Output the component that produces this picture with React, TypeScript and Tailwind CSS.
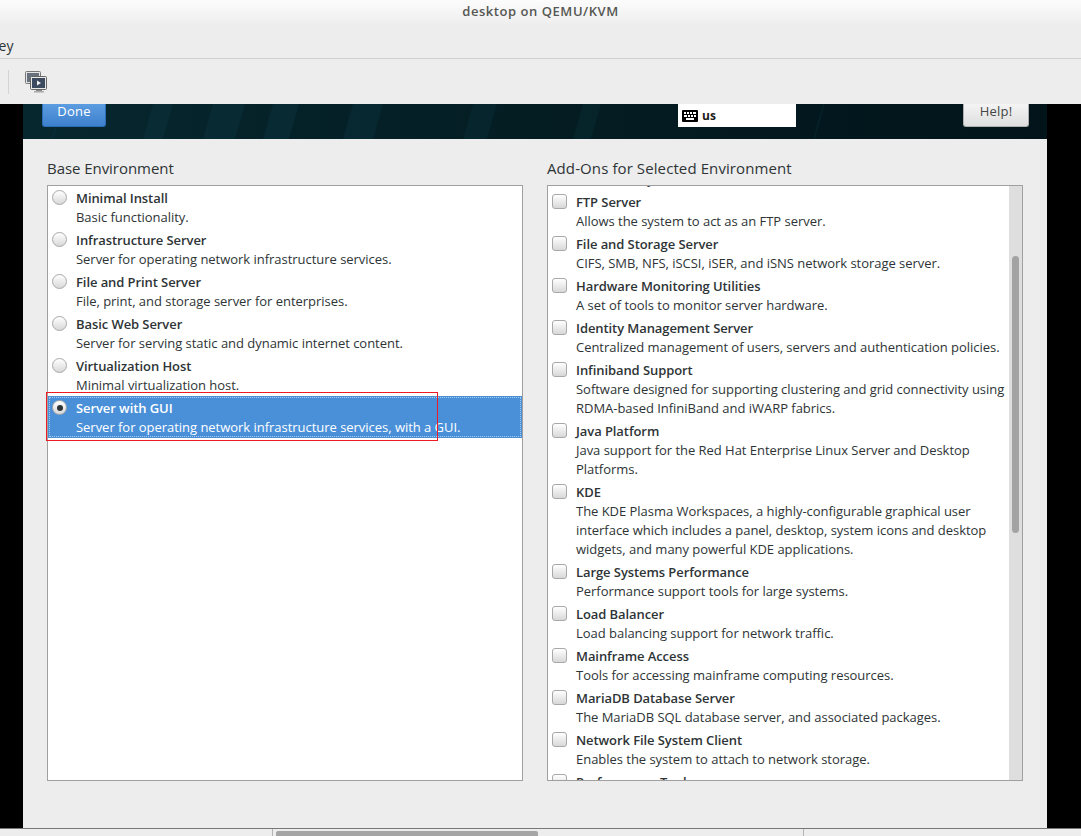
const font = { fontFamily: '"Open Sans", "Noto Sans", sans-serif' };

const baseEnvironments = [
  ["Minimal Install", "Basic functionality."],
  ["Infrastructure Server", "Server for operating network infrastructure services."],
  ["File and Print Server", "File, print, and storage server for enterprises."],
  ["Basic Web Server", "Server for serving static and dynamic internet content."],
  ["Virtualization Host", "Minimal virtualization host."],
];

const addOns: [string, string[]][] = [
  ["FTP Server", ["Allows the system to act as an FTP server."]],
  ["File and Storage Server", ["CIFS, SMB, NFS, iSCSI, iSER, and iSNS network storage server."]],
  ["Hardware Monitoring Utilities", ["A set of tools to monitor server hardware."]],
  ["Identity Management Server", ["Centralized management of users, servers and authentication policies."]],
  ["Infiniband Support", ["Software designed for supporting clustering and grid connectivity using", "RDMA-based InfiniBand and iWARP fabrics."]],
  ["Java Platform", ["Java support for the Red Hat Enterprise Linux Server and Desktop", "Platforms."]],
  ["KDE", ["The KDE Plasma Workspaces, a highly-configurable graphical user", "interface which includes a panel, desktop, system icons and desktop", "widgets, and many powerful KDE applications."]],
  ["Large Systems Performance", ["Performance support tools for large systems."]],
  ["Load Balancer", ["Load balancing support for network traffic."]],
  ["Mainframe Access", ["Tools for accessing mainframe computing resources."]],
  ["MariaDB Database Server", ["The MariaDB SQL database server, and associated packages."]],
  ["Network File System Client", ["Enables the system to attach to network storage."]],
  ["Performance Tools", ["Tools for diagnosing system and application-level performance problems."]],
];

function Radio({ checked }: { checked?: boolean }) {
  return (
    <span className="flex h-[15px] w-[15px] shrink-0 items-center justify-center rounded-full border border-[#a8a8a8] bg-gradient-to-b from-[#ffffff] to-[#d8d8d8]">
      {checked && <span className="h-[6px] w-[6px] rounded-full bg-[#2e3436]" />}
    </span>
  );
}

function RowText({ title, lines }: { title: string; lines: string[] }) {
  return (
    <div className="whitespace-nowrap">
      <div className="h-[19px] text-[13px] leading-[19px] font-semibold tracking-[-0.08px]">{title}</div>
      {lines.map((l) => (
        <div key={l} className="h-[19px] text-[13px] leading-[19px] tracking-[-0.03px]">{l}</div>
      ))}
    </div>
  );
}

function Row({ title, lines, selected }: { title: string; lines: string[]; selected?: boolean }) {
  return (
    <div className={`relative flex gap-[9px] pl-[4px] pt-[3px] pb-[1px] ${selected ? "bg-[#4a90d9] text-white" : "text-[#2e3436]"}`}>
      {selected && <div className="absolute inset-[1px] border border-dotted border-[#a9cbef]" />}
      <div className="pt-[1px]"><Radio checked={selected} /></div>
      <RowText title={title} lines={lines} />
    </div>
  );
}

function CheckRow({ title, lines }: { title: string; lines: string[] }) {
  return (
    <div className="flex gap-[9px] pl-[4px] pt-[3px] pb-[1px] text-[#2e3436]">
      <div className="pt-[1px]">
        <span className="block h-[15px] w-[15px] rounded-[3px] border border-[#a8a8a8] bg-gradient-to-b from-[#ffffff] to-[#d8d8d8]" />
      </div>
      <RowText title={title} lines={lines} />
    </div>
  );
}

function MonitorsIcon() {
  return (
    <svg width="22" height="22" viewBox="0 0 22 22">
      <rect x="0.5" y="0.5" width="15" height="12" rx="1" fill="#e4e4e4" stroke="#777" />
      <rect x="2" y="2" width="12" height="9" fill="#67717e" />
      <rect x="5.5" y="5.5" width="16" height="13" rx="1" fill="#e8e8e8" stroke="#666" />
      <rect x="7" y="7" width="13" height="10" fill="#3b4a5e" />
      <path d="M12 9.5 L16 12 L12 14.5 Z" fill="#f0f0f0" />
      <rect x="11" y="19" width="6" height="1" fill="#888" />
      <rect x="9" y="20" width="10" height="1.5" fill="#aaa" />
    </svg>
  );
}

function KeyboardIcon() {
  return (
    <svg width="16" height="12" viewBox="0 0 16 12">
      <rect width="16" height="12" rx="1" fill="#000" />
      <path d="M2 2h2v2H2zM5 2h2v2H5zM8 2h2v2H8zM11 2h3v2h-3zM2 5h3v2H2zM6 5h2v2H6zM9 5h2v2H9zM12 5h2v2h-2zM4 8h8v2H4z" fill="#fff" />
    </svg>
  );
}

function HeaderStreaks() {
  return (
    <svg className="absolute inset-0 h-full w-full" viewBox="0 0 1024 35" preserveAspectRatio="none">
      <path d="M130 0h20l-10 35h-20zM190 0h32l-10 35h-32zM250 0h26l-10 35h-26zM40 0h2L30 35h-2zM330 0h30l-10 35h-30z" fill="#0d3a44" opacity="0.35" />
      <path d="M450 0h24l-10 35h-24zM560 0h18l-10 35h-18zM800 0h2l-10 35h-2z" fill="#0d3a44" opacity="0.25" />
    </svg>
  );
}

export default function App() {
  return (
    <div className="flex h-[836px] w-[1081px] flex-col overflow-hidden bg-black" style={font}>
      {/* window title + menu */}
      <div className="relative h-[59px] shrink-0 border-b border-[#cfcfcf] bg-gradient-to-b from-[#fcfcfc] to-[#ededed] to-45%">
        <div className="pt-[2px] text-center text-[13px] leading-[19px] font-semibold tracking-[0.55px] text-[#555753]">desktop on QEMU/KVM</div>
        <div className="absolute bottom-[3px] left-[-10px] text-[14px] leading-[19px] text-[#2e3436]">Key</div>
      </div>

      {/* toolbar */}
      <div className="flex h-[45px] shrink-0 items-center bg-[#ededed]">
        <div className="ml-[8px] h-[24px] w-px bg-[#d4d4d4]" />
        <div className="ml-[16px]"><MonitorsIcon /></div>
      </div>

      <div className="flex min-h-0 flex-1 pl-[23px] pr-[34px]">
        <div className="flex min-w-0 flex-1 flex-col bg-[#ededed]">
          {/* anaconda header */}
          <div className="relative flex h-[35px] shrink-0 items-start bg-gradient-to-r from-[#07272f] via-[#041d23] to-[#02141a]">
            <HeaderStreaks />
            <button className="relative ml-[19px] h-[23px] w-[64px] rounded-b-[3px] border border-t-0 border-[#2a6cb5] bg-gradient-to-b from-[#5c9ce0] to-[#3d80cc] pb-[8px] text-[13px] leading-[15px] tracking-[0.2px] text-white">Done</button>
            <div className="relative ml-[572px] flex h-[23px] w-[118px] items-center bg-white pl-[4px]">
              <KeyboardIcon />
              <span className="ml-[4px] text-[12px] font-bold text-[#1a1a1a]">us</span>
            </div>
            <button className="relative ml-[167px] h-[23px] w-[66px] rounded-b-[3px] border border-t-0 border-[#b0b0b0] bg-gradient-to-b from-[#f4f4f4] to-[#dedede] pb-[8px] text-[13px] leading-[15px] tracking-[0.2px] text-[#444]">Help!</button>
          </div>

          {/* spoke body */}
          <div className="grid min-h-0 flex-1 grid-cols-[476px_476px] gap-x-[24px] pl-[24px]">
            <div>
              <div className="mt-[19px] mb-[7px] h-[20px] text-[15px] leading-[20px] tracking-[-0.05px] text-[#2e3436]">Base Environment</div>
              <div className="h-[596px] border border-[#a0a0a0] bg-white">
                {baseEnvironments.map(([t, d]) => (
                  <Row key={t} title={t} lines={[d]} />
                ))}
                <Row title="Server with GUI" lines={["Server for operating network infrastructure services, with a GUI."]} selected />
              </div>
            </div>
            <div>
              <div className="mt-[19px] mb-[7px] h-[20px] text-[15px] leading-[20px] tracking-[0.1px] text-[#2e3436]">Add-Ons for Selected Environment</div>
              <div className="flex h-[596px] overflow-hidden border border-[#a0a0a0] bg-white">
                <div className="min-w-0 flex-1 overflow-hidden">
                  <div className="mt-[-38px]">
                    <CheckRow title="E-mail Server" lines={["Allows the system to act as a mail server."]} />
                    {addOns.map(([t, l]) => (
                      <CheckRow key={t} title={t} lines={l} />
                    ))}
                  </div>
                </div>
                <div className="w-[13px] shrink-0 bg-[#dedede] pt-[70px]">
                  <div className="mx-auto h-[277px] w-[7px] rounded-full bg-[#a3a3a3]" />
                </div>
              </div>
            </div>
          </div>
        </div>
      </div>

      {/* horizontal scrollbar */}
      <div className="relative h-[8px] shrink-0 border-t border-[#777] bg-[#ededed]">
        <div className="absolute left-[272px] top-0 h-full w-px bg-[#b5b5b5]" />
        <div className="absolute left-[803px] top-0 h-full w-px bg-[#b5b5b5]" />
        <div className="absolute left-[276px] top-[2px] h-[6px] w-[262px] rounded-t-[2px] bg-[#a5a5a5]" />
      </div>

      {/* red annotation around the selected row */}
      <div className="absolute left-[46px] top-[392px] h-[49px] w-[392px] border border-[#ed1c24]" />
    </div>
  );
}
